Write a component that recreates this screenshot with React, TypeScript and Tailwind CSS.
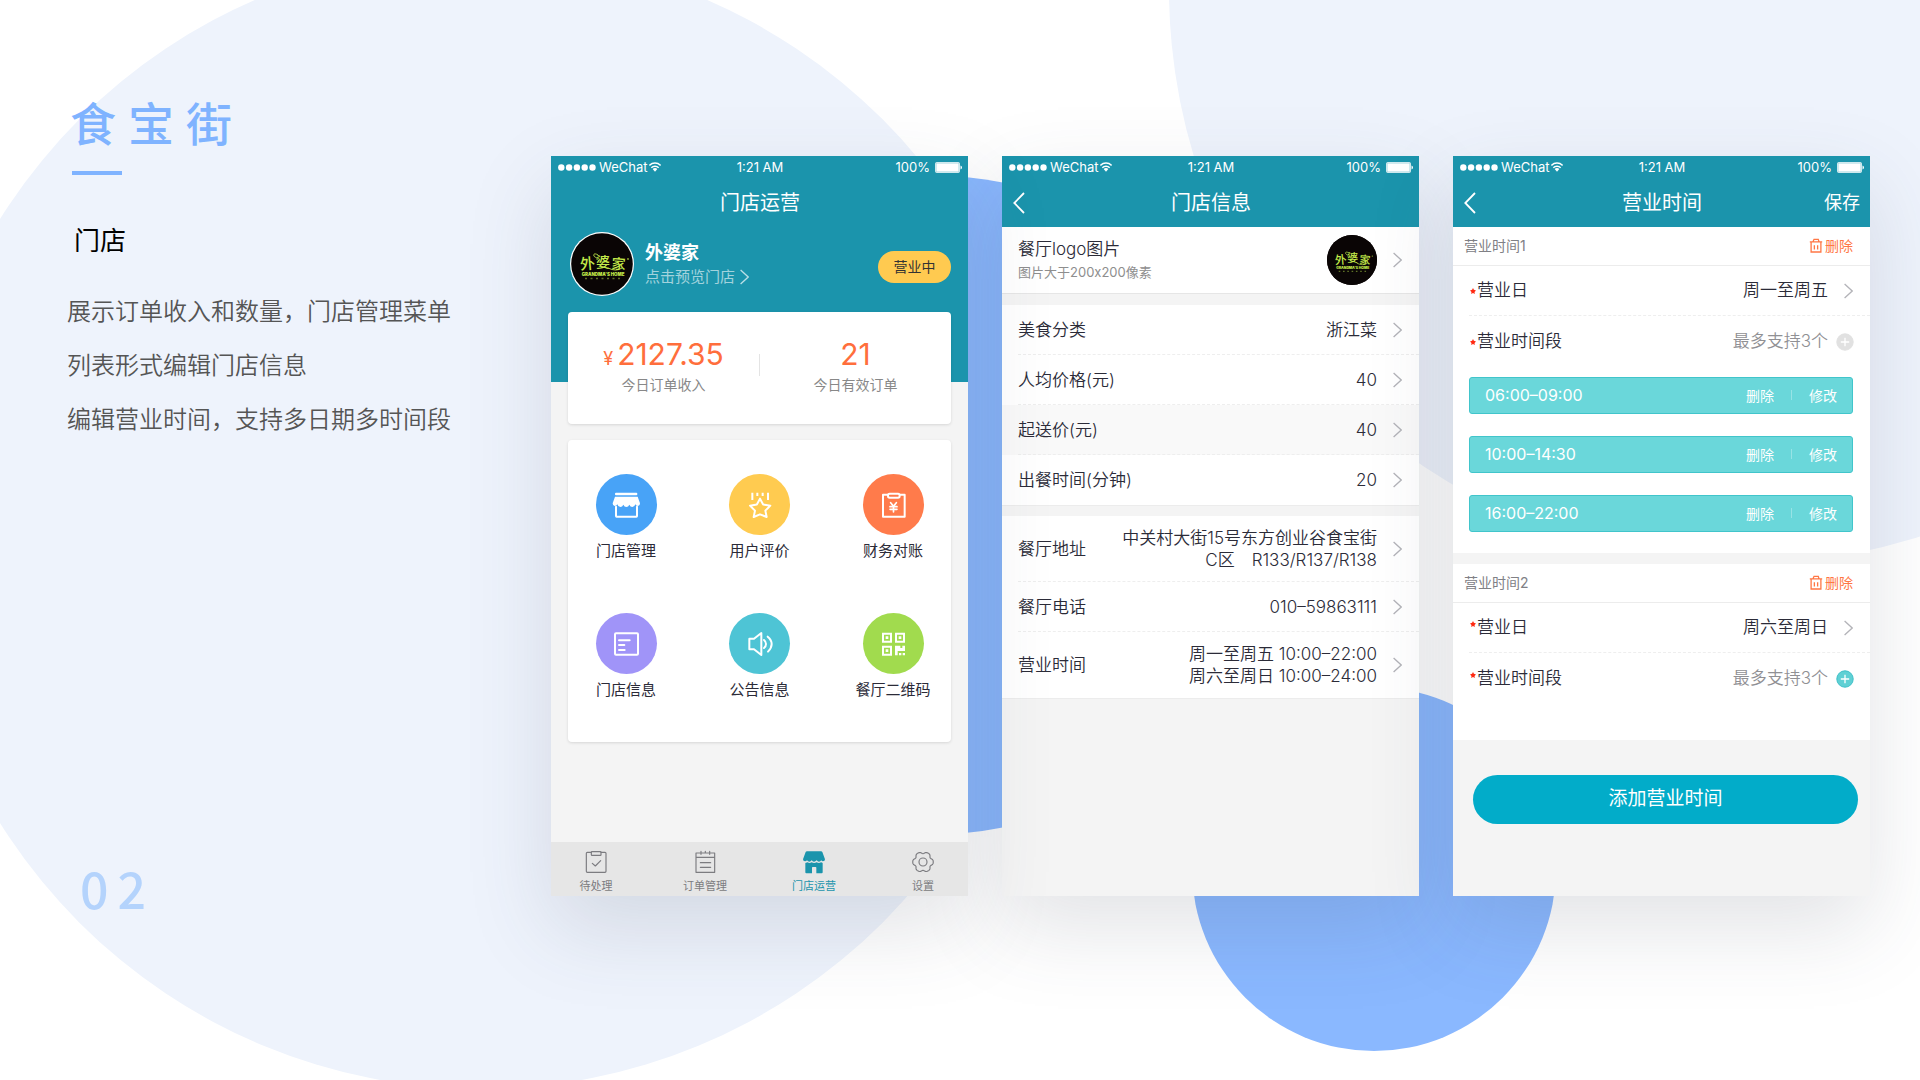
import type { ReactNode } from "react";

const FONT = "font-['Inter','Noto_Sans_CJK_SC',sans-serif]";

function Backdrop() {
  return (
    <svg
      aria-hidden="true"
      className="absolute inset-0 h-full w-full"
      viewBox="0 0 1920 1080"
      preserveAspectRatio="xMidYMid slice"
    >
      <circle cx="481" cy="521" r="568" fill="#eef3fc" />
      <circle cx="1744" cy="-11" r="575" fill="#eef3fc" />
      <circle cx="937" cy="505" r="329" fill="#8ab8ff" />
      <circle cx="1374" cy="869" r="182" fill="#8ab8ff" />
    </svg>
  );
}

/* ---------- shared glyphs ---------- */

function Chevron({ className = "text-[#b3b3b8]" }: { className?: string }) {
  return (
    <svg aria-hidden="true" viewBox="0 0 9 16" className={`h-4 w-[9px] shrink-0 ${className}`} fill="none" stroke="currentColor" strokeWidth="1.3">
      <path d="M0.6 1 L8.2 8 L0.6 15" />
    </svg>
  );
}

function BrandLogo({ size, ring }: { size: string; ring?: boolean }) {
  return (
    <svg role="img" aria-label="外婆家" viewBox="0 0 64 64" className={`shrink-0 ${size}`}>
      <circle cx="32" cy="32" r="32" fill={ring ? "#ffffff" : "#0a0505"} />
      <circle cx="32" cy="32" r={ring ? 30.8 : 32} fill="#0a0505" />
      <g fill="#c3ea4a" fontFamily="'Noto Sans CJK SC', sans-serif" textAnchor="middle">
        <text x="17.500" y="37" fontSize="15" fontWeight="500" transform="rotate(-5 18 32)">外</text>
        <text x="33" y="34.500" fontSize="14" fontWeight="500">婆</text>
        <text x="48.500" y="37" fontSize="14" fontWeight="500" transform="rotate(4 48 32)">家</text>
        <text x="33" y="43.500" fontSize="4.400" fontWeight="900" fontFamily="Inter, sans-serif">GRANDMA'S HOME</text>
      </g>
      <path d="M28 23c-3-2-5-1-4 1s4 1 3 4M38 36q8 4 14 0" fill="none" stroke="#c3ea4a" strokeWidth="0.900" />
      <path d="M15 46.500H52" stroke="#5f7326" strokeWidth="1.500" strokeDasharray="2 3.500" />
      <circle cx="58" cy="27" r="0.900" fill="#8fae38" />
    </svg>
  );
}

function StatusBar() {
  return (
    <div className="flex h-[22px] items-center pr-[6px] pl-[7px] text-[13px] leading-none text-white">
      <div className="flex flex-1 items-center">
        <svg aria-hidden="true" viewBox="0 0 38 7" className="h-[7px] w-[38px]" fill="#fff">
          <circle cx="3.300" cy="3.500" r="3.200" />
          <circle cx="11.100" cy="3.500" r="3.200" />
          <circle cx="18.900" cy="3.500" r="3.200" />
          <circle cx="26.700" cy="3.500" r="3.200" />
          <circle cx="34.500" cy="3.500" r="3.200" />
        </svg>
        <span className="ml-[3px]">WeChat</span>
        <svg aria-hidden="true" viewBox="0 0 36 30" className="ml-[2px] h-[10px] w-3" fill="none" stroke="#fff" strokeWidth="4.500">
          <path d="M1 10C11 1 25 1 35 10" />
          <path d="M7 17C13 11 23 11 29 17" />
          <path d="M11 21C15 17 21 17 25 21L18 29Z" fill="#fff" stroke="none" />
        </svg>
      </div>
      <span>1:21 AM</span>
      <div className="flex flex-1 items-center justify-end gap-[5px]">
        <span>100%</span>
        <svg aria-hidden="true" viewBox="0 0 27 11" className="h-[11px] w-[27px]" fill="#fff">
          <rect x="0.500" y="0.500" width="24" height="10" rx="1" fillOpacity="0.6" stroke="#fff" strokeOpacity="0.7" />
          <rect x="1.500" y="1.500" width="22" height="8" />
          <path d="M25.500 3.500q1.500 0.500 1.500 2t-1.500 2z" />
        </svg>
      </div>
    </div>
  );
}

function NavBar({ title, back, action }: { title: string; back?: boolean; action?: string }) {
  return (
    <div className="grid h-[49px] grid-cols-3 items-center pr-[10px] pl-[11px] text-white">
      <div className="flex">
        {back && (
          <button type="button" aria-label="返回">
            <svg aria-hidden="true" viewBox="0 0 12 22" className="h-[22px] w-3" fill="none" stroke="currentColor" strokeWidth="1.800">
              <path d="M11 1L1.300 11L11 21" />
            </svg>
          </button>
        )}
      </div>
      <h2 className="text-center text-[20px] leading-7">{title}</h2>
      <div className="flex justify-end">
        {action && <button type="button" className="text-[18px] leading-7">{action}</button>}
      </div>
    </div>
  );
}

function Phone({ raised, children }: { raised?: boolean; children: ReactNode }) {
  return (
    <section className={`relative flex min-h-[740px] min-w-0 flex-1 flex-col bg-[#f4f4f4] shadow-[0_32px_80px_0_rgba(60,70,90,0.15)] ${raised ? "z-10" : ""}`}>
      {children}
    </section>
  );
}

/* ---------- store operations ---------- */

const stroke = { fill: "none", stroke: "#fff", strokeWidth: 6, strokeLinejoin: "round", strokeLinecap: "round" } as const;

const menu: { label: string; color: string; icon: ReactNode }[] = [
  {
    label: "门店管理",
    color: "bg-[#48a3f7]",
    icon: (
      <>
        <rect x="15" y="11" width="67" height="8" rx="3" fill="#fff" />
        <path d="M15 23H83L90 43Q90 51 84 51Q78 51 76 46Q74 54 67 54Q61 54 58 47Q55 54 49 54Q43 54 40 47Q37 54 31 54Q24 54 22 46Q20 51 14 51Q8 51 8 43Z" fill="#fff" />
        <path d="M18 53V81Q18 83 20 83H79Q81 83 81 81V53" {...stroke} />
      </>
    ),
  },
  {
    label: "用户评价",
    color: "bg-[#ffcb50]",
    icon: (
      <>
        <path d="M48 29L57.500 46.500L79 50L64 65L68 84L48 76L29 84L33 65L18 50L38.500 46.500Z" {...stroke} />
        <path d="M25 11V33M40 11V21M56 11V21M72 11V33" {...stroke} strokeLinecap="butt" />
      </>
    ),
  },
  {
    label: "财务对账",
    color: "bg-[#ff7b4b]",
    icon: (
      <>
        <path d="M33 17H18V83H83V17H68" {...stroke} />
        <rect x="33" y="14" width="35" height="12" rx="5" {...stroke} />
        <path d="M41 41L49.500 52L58 41M49.500 52V69M39 53H60M39 61H60" {...stroke} strokeWidth={5} />
      </>
    ),
  },
  {
    label: "门店信息",
    color: "bg-[#a094f8]",
    icon: (
      <>
        <rect x="15" y="16" width="69" height="64" rx="3" {...stroke} />
        <path d="M27 37H59M27 51H43M27 66H44" {...stroke} />
      </>
    ),
  },
  {
    label: "公告信息",
    color: "bg-[#4ec4d5]",
    icon: (
      <>
        <path d="M16 32H30L52 15V81L30 64H16Z" {...stroke} />
        <path d="M60 36Q66 41 66 48Q66 55 60 60M71 26Q83 36 83 48Q83 60 72 71" {...stroke} />
      </>
    ),
  },
  {
    label: "餐厅二维码",
    color: "bg-[#a1db4e]",
    icon: (
      <>
        <path d="M18 17H42V41H18ZM57 17H81V41H57ZM18 56H42V80H18Z" {...stroke} strokeLinejoin="miter" />
        <path d="M26 25h8v8h-8ZM65 25h8v8h-8ZM26 64h8v8h-8ZM54 53h16v7h6v-7h8v16H62v13h-8ZM66 75h7v7h-7ZM77 75h7v7h-7Z" fill="#fff" />
      </>
    ),
  },
];

/* Six-lobed gear outline for the settings tab. */
const gearPath =
  Array.from({ length: 72 }, (_, i) => {
    const a = (i / 72) * Math.PI * 2;
    const r = 28.5 + 3 * Math.cos(6 * a) - 0.8 * Math.cos(12 * a);
    return `${i ? "L" : "M"}${(36 + r * Math.cos(a)).toFixed(1)} ${(36 + r * Math.sin(a)).toFixed(1)}`;
  }).join("") + "Z";

const line = { fill: "none", stroke: "currentColor", strokeWidth: 3.5, strokeLinejoin: "round", strokeLinecap: "round" } as const;

const tabs: { label: string; active?: boolean; icon: ReactNode }[] = [
  {
    label: "待处理",
    icon: (
      <>
        <path d="M22 7H10Q7 7 7 10V64Q7 67 10 67H63Q66 67 66 64V10Q66 7 63 7H51" {...line} />
        <rect x="22" y="5" width="29" height="11" rx="2" {...line} />
        <path d="M25 40L34 48L50 32" {...line} />
      </>
    ),
  },
  {
    label: "订单管理",
    icon: (
      <>
        <path d="M9 9H65V67H9ZM9 22H65M24 4V13M37 4V9M50 4V13M22 38H53M22 52H53" {...line} />
      </>
    ),
  },
  {
    label: "门店运营",
    active: true,
    icon: (
      <>
        <path d="M15 4H57Q60 4 61 6L69 28Q69 34 63 34Q59 34 58 31Q55 35 51 35Q47 35 44 31Q40 35 36 35Q32 35 29 31Q26 35 22 35Q18 35 15 31Q13 34 9 34Q3 34 3 28L11 6Q12 4 15 4Z" fill="currentColor" />
        <path d="M10 39Q15 37 17 37Q22 41 29 37Q36 41 44 37Q51 41 57 37Q59 38 62 39V67Q62 70 59 70H43V53Q43 51 41 51H32Q30 51 30 53V70H13Q10 70 10 67Z" fill="currentColor" />
      </>
    ),
  },
  {
    label: "设置",
    icon: (
      <>
        <path d={gearPath} {...line} />
        <circle cx="36" cy="36" r="12" {...line} />
      </>
    ),
  },
];

function OperationsPhone() {
  return (
    <Phone raised>
      <div className="bg-[#1b94ac]">
        <StatusBar />
        <NavBar title="门店运营" />
        <div className="flex h-[155px] items-start pt-[5px] pr-[17px] pl-[19px]">
          <BrandLogo ring size="size-16" />
          <div className="ml-[11px] flex-1 pt-2 text-white">
            <p className="text-[18px] leading-[26px] font-bold">外婆家</p>
            <a href="#preview" className="flex items-center gap-[5px] text-[15px] leading-[22px] text-white/60">
              点击预览门店
              <Chevron className="text-white/70" />
            </a>
          </div>
          <span className="mt-[19px] flex h-8 w-[73px] items-center justify-center rounded-full bg-[#ffca50] pb-px text-[14px] text-[#333]">
            营业中
          </span>
        </div>
      </div>

      <div className="-mt-[70px] flex flex-1 flex-col gap-4 px-[17px]">
        <dl className="flex h-[112px] items-center rounded bg-white pb-[6px] shadow-[0_1px_3px_rgba(0,0,0,0.12)]">
          <div className="flex flex-1 flex-col-reverse items-center">
            <dt className="text-[14px] leading-[22px] text-[#888]">今日订单收入</dt>
            <dd className="flex items-baseline gap-1 text-[30px] leading-10 text-[#ff6e3c]">
              <span className="text-[18px] leading-none">¥</span>2127.35
            </dd>
          </div>
          <div className="h-[22px] w-px bg-[#e4e4e4]" />
          <div className="flex flex-1 flex-col-reverse items-center">
            <dt className="text-[14px] leading-[22px] text-[#888]">今日有效订单</dt>
            <dd className="flex items-baseline text-[30px] leading-10 text-[#ff6e3c]">21</dd>
          </div>
        </dl>

        <nav className="grid grid-cols-[80px_80px_80px] justify-between gap-y-[50px] rounded bg-white px-[18px] pt-[34px] pb-10 shadow-[0_1px_3px_rgba(0,0,0,0.12)]">
          {menu.map((m) => (
            <a key={m.label} href="#menu" className="flex flex-col items-center gap-1">
              <span className={`flex size-[61px] items-center justify-center rounded-full ${m.color}`}>
                <svg aria-hidden="true" viewBox="0 0 96 96" className="size-8">{m.icon}</svg>
              </span>
              <span className="text-[15px] leading-6 whitespace-nowrap text-[#2b2b38]">{m.label}</span>
            </a>
          ))}
        </nav>
      </div>

      <nav className="flex h-[54px] justify-between bg-[#e6e6e6] px-[23px] pt-2">
        {tabs.map((t) => (
          <a key={t.label} href="#tab" className={`flex w-11 flex-col items-center gap-1 ${t.active ? "text-[#1b94ac]" : "text-[#7c7c80]"}`}>
            <svg aria-hidden="true" viewBox="0 0 72 72" className="size-6">{t.icon}</svg>
            <span className="text-[11px] leading-4 whitespace-nowrap">{t.label}</span>
          </a>
        ))}
      </nav>
    </Phone>
  );
}

/* ---------- store information ---------- */

function InfoRow({ label, value, tall, shaded, last }: { label: string; value: string[]; tall?: boolean; shaded?: boolean; last?: boolean }) {
  return (
    <div className={`pl-4 ${shaded ? "bg-[#f9f9f9]" : "bg-white"}`}>
      <button
        type="button"
        className={`flex w-full items-center pr-[17px] text-[17px] leading-[22px] font-[350] text-[#2b2b38] ${tall ? "h-[66px]" : "h-[50px]"} ${last ? "" : "border-b border-dashed border-[#eeeeee]"}`}
      >
        <span>{label}</span>
        <span className="ml-auto text-right">
          {value.map((v) => (
            <span key={v} className="block whitespace-nowrap">{v}</span>
          ))}
        </span>
        <span className="ml-4 flex">
          <Chevron />
        </span>
      </button>
    </div>
  );
}

function InformationPhone() {
  return (
    <Phone>
      <div className="bg-[#1b94ac]">
        <StatusBar />
        <NavBar title="门店信息" back />
      </div>
      <button type="button" className="flex h-[67px] items-center border-b border-[#e6e6e6] bg-white pr-[17px] pl-4 text-left">
        <span>
          <span className="block text-[17px] leading-6 font-[350] text-[#2b2b38]">餐厅logo图片</span>
          <span className="block text-[13px] leading-[22px] text-[#8e8e8e]">图片大于200x200像素</span>
        </span>
        <span className="ml-auto flex">
          <BrandLogo size="size-[50px]" />
        </span>
        <span className="ml-4 flex">
          <Chevron />
        </span>
      </button>
      <div className="mt-[11px] border-b border-[#ececec]">
        <InfoRow label="美食分类" value={["浙江菜"]} />
        <InfoRow label="人均价格(元)" value={["40"]} />
        <InfoRow label="起送价(元)" value={["40"]} shaded />
        <InfoRow label="出餐时间(分钟)" value={["20"]} last />
      </div>
      <div className="mt-[10px] border-b border-[#ececec]">
        <InfoRow label="餐厅地址" value={["中关村大街15号东方创业谷食宝街", "C区　R133/R137/R138"]} tall />
        <InfoRow label="餐厅电话" value={["010–59863111"]} />
        <InfoRow label="营业时间" value={["周一至周五 10:00–22:00", "周六至周日 10:00–24:00"]} tall last />
      </div>
    </Phone>
  );
}

/* ---------- business hours ---------- */

function PeriodHeader({ title }: { title: string }) {
  return (
    <div className="flex h-[39px] items-center justify-between border-b border-[#ececec] pr-[17px] pb-px pl-[11px] text-[14px]">
      <h3 className="text-[#808085]">{title}</h3>
      <button type="button" className="flex items-center gap-[2px] text-[#ff7745]">
        <svg aria-hidden="true" viewBox="0 0 42 46" className="h-[15px] w-[14px]" fill="none" stroke="currentColor" strokeWidth="4">
          <path d="M2 12H40M6 13V43H36V13M12 11L15 4H28L30 11M16 22V35M26 22V35" />
        </svg>
        删除
      </button>
    </div>
  );
}

function Label({ text, raised }: { text: string; raised?: boolean }) {
  return (
    <span className="flex items-center gap-px text-[17px] font-[350] text-[#2b2b38]">
      <svg aria-hidden="true" viewBox="0 0 20 20" className={`size-[6px] ${raised ? "-mt-2" : ""}`} fill="#ff2a12">
        <path d="M10 0L13 6L20 8L15 13L16 20L10 16.500L4 20L5 13L0 8L7 6Z" />
      </svg>
      {text}
    </span>
  );
}

function DayRow({ value, raised }: { value: string; raised?: boolean }) {
  return (
    <div className="ml-4">
      <button type="button" className="flex h-[50px] w-full items-center border-b border-dashed border-[#eeeeee] pt-px pr-[17px] pl-px">
        <Label text="营业日" raised={raised} />
        <span className="ml-auto text-[17px] font-[350] text-[#2b2b38]">{value}</span>
        <span className="ml-4 flex">
          <Chevron />
        </span>
      </button>
    </div>
  );
}

function SlotHeader({ enabled }: { enabled?: boolean }) {
  return (
    <div className="flex h-[50px] items-center pt-px pr-4 pl-[17px]">
      <Label text="营业时间段" raised={enabled} />
      <span className="ml-auto text-[17px] font-[350] text-[#909094]">最多支持3个</span>
      <button type="button" aria-label="添加时间段" disabled={!enabled} className="ml-2">
        <svg aria-hidden="true" viewBox="0 0 18 18" className="size-[18px]">
          <circle cx="9" cy="9" r="8.200" fill={enabled ? "#5fd0d4" : "#e1e1e1"} stroke={enabled ? "#3fc0c8" : "#e1e1e1"} />
          <path d="M9 4.800V13.200M4.800 9H13.200" stroke="#fff" strokeWidth="1.300" />
        </svg>
      </button>
    </div>
  );
}

function HoursPhone() {
  return (
    <Phone raised>
      <div className="bg-[#1b94ac]">
        <StatusBar />
        <NavBar title="营业时间" back action="保存" />
      </div>
      <div className="bg-white pb-[21px]">
        <PeriodHeader title="营业时间1" />
        <DayRow value="周一至周五" />
        <SlotHeader />
        <ul className="mt-[11px] flex flex-col gap-[22px] pr-[17px] pl-4">
          {["06:00–09:00", "10:00–14:30", "16:00–22:00"].map((s) => (
            <li key={s} className="flex h-[37px] items-center rounded-[3px] border border-[#41c5cb] bg-[#6ad7da] px-[15px] pb-px text-[14px] text-white">
              <span className="text-[16px]">{s}</span>
              <button type="button" className="ml-auto">删除</button>
              <span className="mx-[17px] h-[10px] w-px bg-white/30" />
              <button type="button">修改</button>
            </li>
          ))}
        </ul>
      </div>
      <div className="mt-[11px] bg-white pb-[37px]">
        <PeriodHeader title="营业时间2" />
        <DayRow value="周六至周日" raised />
        <SlotHeader enabled />
      </div>
      <button type="button" className="mt-[35px] mr-3 ml-5 h-[49px] rounded-full bg-[#02acc9] text-[19px] text-white">
        添加营业时间
      </button>
    </Phone>
  );
}

export default function App() {
  return (
    <main className={`relative min-h-screen overflow-hidden bg-white ${FONT}`}>
      <Backdrop />
      <div className="relative flex min-h-screen pr-[50px]">
        <header className="flex w-[551px] shrink-0 flex-col pt-[94px] pl-[72px]">
          <h1 className="-ml-[2px] text-[46px] leading-[60px] font-medium tracking-[12px] text-[#7fb3ff]">食宝街</h1>
          <div className="mt-[17px] h-1 w-[50px] bg-[#7fb3ff]" />
          <p className="mt-12 pl-[2px] text-[26px] leading-9 text-black">门店</p>
          <div className="mt-[26px] -ml-[5px] text-[24px] leading-[54px] font-[350] text-[#555]">
            <p>展示订单收入和数量，门店管理菜单</p>
            <p>列表形式编辑门店信息</p>
            <p>编辑营业时间，支持多日期多时间段</p>
          </div>
          <p className="mt-[410px] pl-2 font-['Noto_Sans_CJK_SC',sans-serif] text-[50px] leading-[60px] font-medium tracking-[9px] text-[#b4d3fc]">02</p>
        </header>
        <div className="flex min-w-0 flex-1 items-start gap-[34px] pt-[156px] pb-[184px]">
          <OperationsPhone />
          <InformationPhone />
          <HoursPhone />
        </div>
      </div>
    </main>
  );
}
